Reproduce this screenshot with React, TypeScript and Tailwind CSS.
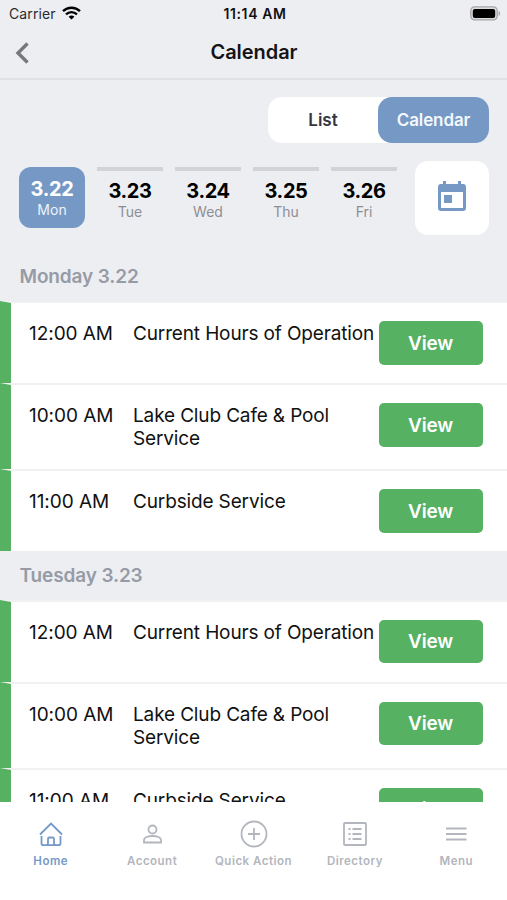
import clsx from "clsx"
import { ReactNode } from "react"

const days = [
    { date: "3.22", name: "Mon" },
    { date: "3.23", name: "Tue" },
    { date: "3.24", name: "Wed" },
    { date: "3.25", name: "Thu" },
    { date: "3.26", name: "Fri" },
]

const events = [
    { time: "12:00 AM", title: "Current Hours of Operation", size: "h-[82px]" },
    { time: "10:00 AM", title: "Lake Club Cafe & Pool Service", size: "h-[86px]" },
    { time: "11:00 AM", title: "Curbside Service", size: "h-[82px]" },
]

const sections = [
    { title: "Monday 3.22", size: "h-[49px]" },
    { title: "Tuesday 3.23", size: "h-[48.5px]" },
]

function StatusBar() {
    return (
        <div className="flex h-7 items-center justify-between pl-[9px] pr-[6px] pb-[1px] text-[14px] text-[#2b2b2d]">
            <div className="flex flex-1 items-center gap-[6px]">
                <span className="tracking-[0.1px]">Carrier</span>
                <svg width="19" height="14" viewBox="0 0 19 14" className="-mt-[1px]" fill="none" stroke="#000" strokeWidth="2.4">
                    <path d="M1 5.2C5.8.6 13.2.6 18 5.2" />
                    <path d="M4 8.4c3.2-3 7.8-3 11 0" />
                    <path d="M9.5 13.5 6.6 10.7c1.7-1.5 4.1-1.5 5.8 0z" fill="#000" stroke="none" />
                </svg>
            </div>
            <span className="text-[14px] font-semibold tracking-[0.6px] text-[#111]">11:14 AM</span>
            <div className="flex flex-1 justify-end">
                <svg width="31" height="15" viewBox="0 0 31 15" className="-mt-[1px]">
                    <rect x=".8" y=".9" width="26.4" height="13" rx="3.8" fill="#dcdcde" stroke="#a5a5a8" strokeWidth="1.3" />
                    <rect x="2.8" y="2.9" width="22.4" height="9" rx="2" fill="#000" />
                    <path d="M28.6 5v5c2-.8 2-4.2 0-5z" fill="#a5a5a8" />
                </svg>
            </div>
        </div>
    )
}

function EventRow({ time, title, size }: { time: string; title: string; size: string }) {
    return (
        <div className={clsx("flex shrink-0 border-l-[11px] border-t-2 border-l-[#57b163] border-t-[#f1f1f3] bg-white pl-[18px] pt-[18px] text-[19px] leading-[23px] text-[#111]", size)}>
            <p className="w-[104px] pt-[1px] tracking-[-0.05px] whitespace-nowrap">{time}</p>
            <p className="w-[245.5px] pt-[1px] tracking-[-0.14px]">{title}</p>
            <button className="h-[43.5px] w-[104px] shrink-0 rounded-[5px] bg-[#57b163] pt-[1px] text-[19px] font-semibold tracking-[-0.2px] text-white">View</button>
        </div>
    )
}

function Tab({ label, active, children }: { label: string; active?: boolean; children: ReactNode }) {
    return (
        <div className={clsx("flex flex-1 flex-col items-center", active ? "text-[#7599c8]" : "text-[#b3b6bd]")}>
            <svg width="30" height="30" viewBox="0 0 30 30" fill="none" stroke="currentColor" strokeWidth="1.8">
                {children}
            </svg>
            <span className="mt-[4px] text-[11.5px] leading-[16px] font-semibold tracking-[0.5px] whitespace-nowrap">{label}</span>
        </div>
    )
}

export default function App() {
    return (
        <div className="flex h-[900px] w-[507px] flex-col overflow-hidden bg-[#edeef2] font-[Inter,sans-serif]">
            <StatusBar />
            <div className="flex h-[52px] items-center border-b-2 border-[#dfe0e4] px-[14px]">
                <svg width="16" height="22" viewBox="0 0 16 22" className="-mt-[1px]" fill="none" stroke="#77787b" strokeWidth="3.4">
                    <path d="M13.5 1.5 4 11l9.5 9.5" />
                </svg>
                <h1 className="flex-1 pr-[15px] pb-[2px] text-center text-[20px] font-semibold tracking-[-0.05px] text-[#141416]">Calendar</h1>
            </div>

            <div className="flex justify-end pt-[17px] pr-[18px]">
                <div className="flex h-[46px] w-[221px] rounded-[14px] bg-white text-[17px] font-semibold">
                    <button className="flex-1 pt-[1px] text-[#34353f]">List</button>
                    <button className="w-[111px] rounded-[14px] bg-[#7599c4] pt-[1px] tracking-[-0.1px] text-[#f4f8fd]">Calendar</button>
                </div>
            </div>

            <div className="mt-[18px] flex h-[74px] items-start pl-[19px]">
                <div className="flex gap-3 pt-[6px]">
                    {days.map((day, i) => (
                        <div
                            key={day.date}
                            className={clsx("flex h-[61px] w-[66px] flex-col items-center", i === 0 ? "rounded-[12px] bg-[#7599c4] pt-[10px] text-white" : "border-t-4 border-[#d2d3d7] pt-2 text-black")}
                        >
                            <span className="text-[20px] leading-[24px] font-bold tracking-[-0.4px]">{day.date}</span>
                            <span className={clsx("text-[14px] leading-[18px]", i === 0 ? "text-[#eef3fa]" : "text-[#8d8e93]")}>{day.name}</span>
                        </div>
                    ))}
                </div>
                <button className="ml-[18px] flex h-[74px] w-[74px] items-center justify-center rounded-[13px] bg-white pb-[4px]">
                    <svg width="28" height="32" viewBox="0 0 28 32" fill="#7599c4">
                        <path d="M3 4h2V1h3v3h12V1h3v3h2a3 3 0 0 1 3 3v21a3 3 0 0 1-3 3H3a3 3 0 0 1-3-3V7a3 3 0 0 1 3-3zm0 8v16h22V12z" fillRule="evenodd" />
                        <path d="M6 15h8v8H6z" />
                    </svg>
                </button>
            </div>

            <div className="mt-[17px] flex h-[550px] flex-col overflow-hidden">
                {sections.map((section) => (
                    <div key={section.title} className="shrink-0">
                        <h2 className={clsx("pl-[19.5px] text-[19px] leading-[50px] font-semibold tracking-[-0.12px] text-[#969ba5]", section.size)}>{section.title}</h2>
                        {events.map((event) => (
                            <EventRow key={event.time} {...event} />
                        ))}
                    </div>
                ))}
            </div>

            <nav className="flex flex-1 bg-white pt-[17px]">
                <Tab label="Home" active>
                    <path d="M4 15.5 15 4.500l11 11M5.500 17v7.200q0 2 2 2H10q2 0 2-2v-4.200q0-1.500 1.500-1.500h3q1.500 0 1.500 1.500v4.200q0 2 2 2h2.500q2 0 2-2V17M11.500 26.200h7" />
                </Tab>
                <Tab label="Account">
                    <circle cx="15.500" cy="10.500" r="4" />
                    <path d="M7 23.500v-2.300c0-5.600 17-5.600 17 0v2.300z" />
                </Tab>
                <Tab label="Quick Action">
                    <circle cx="15" cy="15" r="12.500" />
                    <path d="M15 9v12M9 15h12" />
                </Tab>
                <Tab label="Directory">
                    <rect x="4" y="4" width="22" height="22" rx="1" />
                    <path d="M8.500 10h2M12.500 10h9M8.500 15h2M12.500 15h9M8.500 20h2M12.500 20h9" />
                </Tab>
                <Tab label="Menu">
                    <path d="M5 9.500h20.500M5 15h20.500M5 20.500h20.500" strokeWidth="2" />
                </Tab>
            </nav>
        </div>
    )
}
